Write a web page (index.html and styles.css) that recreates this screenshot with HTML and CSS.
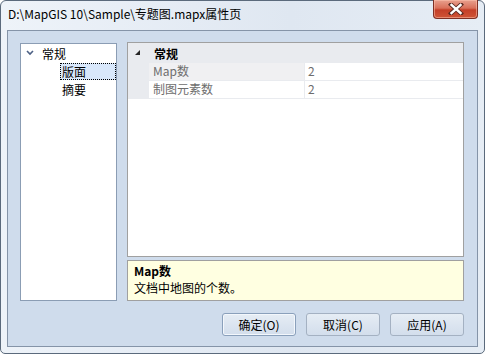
FILE: index.html
```html
<!DOCTYPE html>
<html lang="zh-CN">
<head>
  <meta charset="UTF-8" />
  <title>属性页</title>
  <link rel="stylesheet" href="styles.css">
</head>
<body>
  <div class="window">
    <div class="titlebar">
      <span class="title">D:\MapGIS 10\Sample\专题图.mapx属性页</span>
      <button class="close">
        <svg width="16" height="12" viewBox="0 0 16 12">
          <path d="M3 1.5 L13 10.5 M13 1.5 L3 10.5" stroke="#5a2a22" stroke-width="4.2" stroke-linecap="square"/>
          <path d="M3.5 2 L12.5 10 M12.5 2 L3.5 10" stroke="#fff" stroke-width="2.4" stroke-linecap="square"/>
        </svg>
      </button>
    </div>

    <div class="client">
      <div class="main">
        <ul class="tree">
          <li class="node">
            <svg class="expander" width="8" height="6" viewBox="0 0 8 6">
              <path d="M1 1 L4 4 L7 1" stroke="#4d6185" stroke-width="1.6" fill="none"/>
            </svg>
            <span>常规</span>
          </li>
          <li class="leaf selected"><span>版面</span></li>
          <li class="leaf"><span>摘要</span></li>
        </ul>

        <div class="right">
          <div class="grid">
            <div class="category">
              <svg class="collapse" width="6" height="6" viewBox="0 0 6 6">
                <polygon points="5,0 5,5 0,5" fill="#262626"/>
              </svg>
              <span>常规</span>
            </div>
            <div class="row active">
              <span class="name">Map数</span>
              <span class="value">2</span>
            </div>
            <div class="row">
              <span class="name">制图元素数</span>
              <span class="value">2</span>
            </div>
          </div>
          <div class="desc">
            <div class="desc-title">Map数</div>
            <div class="desc-text">文档中地图的个数。</div>
          </div>
        </div>
      </div>

      <div class="buttons">
        <button class="btn default">确定(O)</button>
        <button class="btn">取消(C)</button>
        <button class="btn">应用(A)</button>
      </div>
    </div>
  </div>
</body>
</html>
```

FILE: styles.css
```css
* {
  box-sizing: border-box;
  margin: 0;
  padding: 0;
}
body {
  font-family: "Noto Sans CJK SC", "Open Sans", sans-serif;
  font-size: 12px;
  color: #000;
  background: #fff;
  width: 485px;
  height: 354px;
  overflow: hidden;
}
.window {
  width: 485px;
  height: 354px;
  border: 1px solid #5b6a7c;
  border-radius: 6px 6px 5px 5px;
  background: linear-gradient(to right, #eef3f9 0%, #e4ebf4 40%, #dfe7f1 60%, #e6edf5 100%);
  padding: 0 6px 6px 6px;
  display: flex;
  flex-direction: column;
}
.titlebar {
  height: 29px;
  display: flex;
  align-items: flex-start;
  justify-content: space-between;
}
.title {
  margin-top: 4px;
  margin-left: 1px;
  font-size: 12px;
  color: #000;
}
.close {
  width: 45px;
  height: 19px;
  margin-top: -1px;
  border: 1px solid #7e2f24;
  border-top: none;
  border-radius: 0 0 4px 4px;
  background: linear-gradient(to bottom, #e8a08e 0%, #d9705a 45%, #c43f28 55%, #cf5436 100%);
  box-shadow: inset 0 0 0 1px rgba(255, 200, 180, 0.5);
  display: flex;
  align-items: center;
  justify-content: center;
}
.client {
  flex: 1;
  background: #cfdcec;
  border: 1px solid #8594a8;
  padding: 11px 13px 0 12px;
}
.main {
  display: flex;
  gap: 10px;
  height: 259px;
}
.tree {
  list-style: none;
  width: 97px;
  margin-top: 1px;
  background: #fff;
  border: 1px solid #8b9db4;
}
.tree li {
  height: 18px;
  display: flex;
  align-items: center;
}
.node .expander {
  margin-left: 5px;
  margin-right: 8px;
}
.leaf span {
  margin-left: 39px;
  padding: 0 18px 0 2px;
  height: 17px;
  line-height: 17px;
  width: 56px;
}
.leaf.selected span {
  background: #d9e8fb;
  outline: 1px dotted #000;
  outline-offset: -1px;
}
.right {
  width: 338px;
  display: flex;
  flex-direction: column;
  gap: 3px;
}
.grid {
  height: 216px;
  background: #fff;
  border: 1px solid #a0a0a0;
}
.category {
  height: 20px;
  background: #e9ebef;
  display: flex;
  align-items: center;
  font-weight: bold;
  line-height: 17px;
}
.collapse {
  margin-left: 7px;
  margin-right: 13px;
}
.row {
  height: 18px;
  display: flex;
  border-bottom: 1px solid #e9ebef;
  padding-left: 21px;
  background: #e9ebef;
}
.row .name {
  width: 156px;
  padding-left: 4px;
  line-height: 16px;
  color: #6d6d6d;
  background: #fff;
  border-right: 1px solid #e9ebef;
}
.row.active .name {
  background: #f0f0f2;
}
.row .value {
  flex: 1;
  padding-left: 3px;
  line-height: 16px;
  color: #6d6d6d;
  background: #fff;
}
.desc {
  height: 41px;
  background: #ffffe1;
  border: 1px solid #a0a0a0;
  padding: 1px 6px;
}
.desc-title {
  font-weight: bold;
  line-height: 17px;
}
.desc-text {
  line-height: 17px;
}
.buttons {
  display: flex;
  justify-content: flex-end;
  gap: 10px;
  margin-top: 12px;
}
.btn {
  width: 74px;
  height: 23px;
  font-family: inherit;
  font-size: 12px;
  color: #000;
  border: 1px solid #a4b1c2;
  border-radius: 3px;
  background: linear-gradient(to bottom, #e6edf5 0%, #dce5f0 50%, #d3deec 100%);
}
.btn.default {
  border-color: #8aa0bb;
  box-shadow: inset 0 0 0 1px #f3f7fc;
}
```
